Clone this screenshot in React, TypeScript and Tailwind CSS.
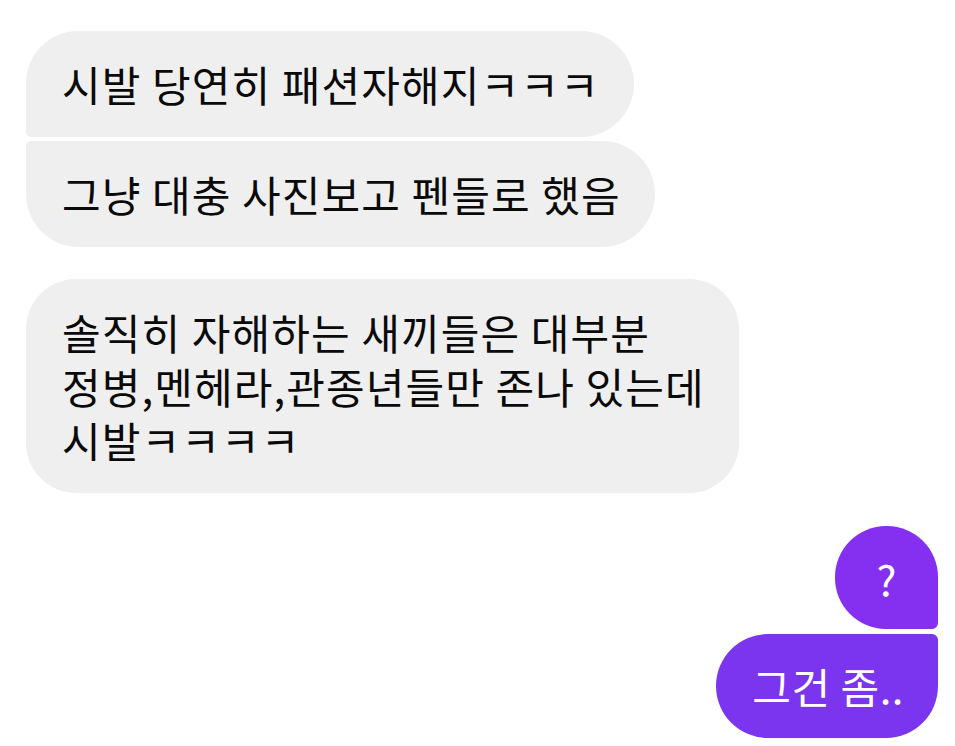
const font = { fontFamily: '"Noto Sans CJK KR", "Noto Sans", sans-serif' };

function Incoming({ lines, shape }: { lines: string[]; shape: string }) {
  return (
    <div
      className={`self-start bg-[#efefef] text-[#0a0a0a] pl-[36px] pr-[34px] py-[26px] text-[42px] leading-[54px] tracking-[1.1px] ${shape}`}
    >
      {lines.map((l, i) => (
        <div key={i} className="whitespace-nowrap">
          {l}
        </div>
      ))}
    </div>
  );
}

function Outgoing({ text, shape, extra }: { text: string; shape: string; extra: string }) {
  return (
    <div
      className={`self-end text-white text-[42px] leading-[54px] whitespace-nowrap ${shape} ${extra}`}
    >
      {text}
    </div>
  );
}

export default function App() {
  return (
    <div className="w-[955px] h-[746px] bg-white overflow-hidden" style={font}>
      <div className="flex flex-col pt-[31px] pl-[26px] pr-[17px]">
        <Incoming
          lines={['시발 당연히 패션자해지ㅋㅋㅋ']}
          shape="rounded-tl-[52px] rounded-tr-[53px] rounded-br-[53px] rounded-bl-[5px]"
        />
        <div className="h-[4px]" />
        <Incoming
          lines={['그냥 대충 사진보고 펜들로 했음']}
          shape="rounded-tl-[5px] rounded-tr-[53px] rounded-br-[53px] rounded-bl-[53px]"
        />
        <div className="h-[32px]" />
        <Incoming
          lines={['솔직히 자해하는 새끼들은 대부분', '정병,멘헤라,관종년들만 존나 있는데', '시발ㅋㅋㅋㅋ']}
          shape="rounded-[50px]"
        />
        <div className="h-[33px]" />
        <Outgoing
          text="?"
          shape="rounded-tl-[51px] rounded-tr-[51px] rounded-bl-[51px] rounded-br-[6px]"
          extra="bg-[#8530f0] w-[103px] h-[103px] flex items-center justify-center"
        />
        <div className="h-[5px]" />
        <Outgoing
          text="그건 좀.."
          shape="rounded-tl-[52px] rounded-tr-[6px] rounded-bl-[52px] rounded-br-[52px]"
          extra="bg-[#7b35ee] h-[104px] pl-[36px] pr-[34px] tracking-[0.5px] flex items-center"
        />
      </div>
    </div>
  );
}
